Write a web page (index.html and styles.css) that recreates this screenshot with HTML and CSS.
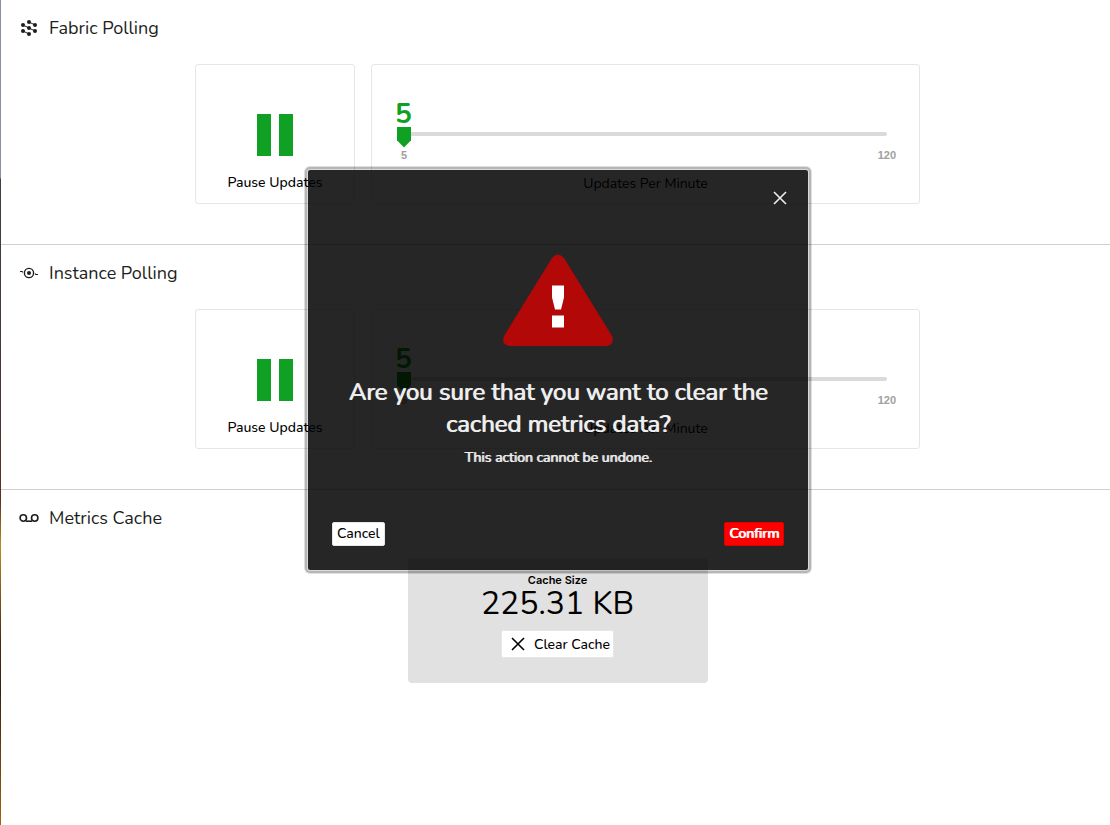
FILE: index.html
```html
<!DOCTYPE html>
<html lang="en">
<head>
<meta charset="utf-8">
<title>Settings</title>
<link rel="stylesheet" href="styles.css">
</head>
<body>
<main class="page">
  <section class="panel">
    <h2 class="panel-title">
      <svg class="panel-icon" viewBox="0 0 20 20" aria-hidden="true">
        <path d="M4 7l6 3 6 3M10 4l6 3M4 13l6 3" fill="none" stroke="currentColor" stroke-width="1"/>
        <g fill="currentColor"><circle cx="10" cy="4" r="2"/><circle cx="4" cy="7" r="2"/><circle cx="16" cy="7" r="2"/><circle cx="10" cy="10" r="2"/><circle cx="4" cy="13" r="2"/><circle cx="16" cy="13" r="2"/><circle cx="10" cy="16" r="2"/></g>
      </svg>
      Fabric Polling
    </h2>
    <div class="cards">
      <button class="card pause" type="button">
        <svg class="pause-icon" viewBox="0 0 36 42" aria-hidden="true"><path d="M0 0h14v42H0zM22 0h14v42H22z" fill="currentColor"/></svg>
        <span>Pause Updates</span>
      </button>
      <div class="card rate">
        <output class="rate-value" for="fabric-rate">5</output>
        <input class="slider" id="fabric-rate" type="range" min="5" max="120" value="5">
        <div class="scale"><span>5</span><span>120</span></div>
        <label class="rate-label" for="fabric-rate">Updates Per Minute</label>
      </div>
    </div>
  </section>

  <section class="panel">
    <h2 class="panel-title">
      <svg class="panel-icon" viewBox="0 0 20 20" aria-hidden="true">
        <circle cx="10" cy="10" r="4.6" fill="none" stroke="currentColor" stroke-width="1.4"/>
        <circle cx="10" cy="10" r="2" fill="currentColor"/>
        <path d="M1 8.5h2l1 .7M19 11.5h-2l-1-.7" fill="none" stroke="currentColor" stroke-width="1.1"/>
      </svg>
      Instance Polling
    </h2>
    <div class="cards">
      <button class="card pause" type="button">
        <svg class="pause-icon" viewBox="0 0 36 42" aria-hidden="true"><path d="M0 0h14v42H0zM22 0h14v42H22z" fill="currentColor"/></svg>
        <span>Pause Updates</span>
      </button>
      <div class="card rate">
        <output class="rate-value" for="instance-rate">5</output>
        <input class="slider" id="instance-rate" type="range" min="5" max="120" value="5">
        <div class="scale"><span>5</span><span>120</span></div>
        <label class="rate-label" for="instance-rate">Updates Per Minute</label>
      </div>
    </div>
  </section>

  <section class="panel panel-last">
    <h2 class="panel-title">
      <svg class="panel-icon" viewBox="0 0 20 20" aria-hidden="true">
        <g fill="none" stroke="currentColor" stroke-width="1.6"><circle cx="4.3" cy="10" r="3.2"/><circle cx="15.7" cy="10" r="3.2"/><path d="M7 13.2h6"/></g>
      </svg>
      Metrics Cache
    </h2>
    <div class="cache">
      <span class="cache-label">Cache Size</span>
      <span class="cache-size">225.31 KB</span>
      <button class="clear" type="button">
        <svg class="cross" viewBox="0 0 14 14" aria-hidden="true"><path d="M1 1l12 12M13 1L1 13" fill="none" stroke="currentColor" stroke-width="1.6"/></svg>
        Clear Cache
      </button>
    </div>
  </section>
</main>

<div class="overlay">
  <div class="dialog" role="alertdialog" aria-modal="true" aria-labelledby="dialog-title" aria-describedby="dialog-text">
    <button class="close" type="button" aria-label="Close">
      <svg class="cross" viewBox="0 0 14 14" aria-hidden="true"><path d="M1 1l12 12M13 1L1 13" fill="none" stroke="currentColor" stroke-width="1.6"/></svg>
    </button>
    <svg class="warning" viewBox="0 0 110 92" aria-hidden="true">
      <path d="M49 4q6-7 12 0L109 82q3 8-5 10H6q-8-2-5-10z" fill="#b30808"/>
      <path d="M49 31.500h12v12l-3 12h-6l-3-12zM49 61.500h12v12H49z" fill="#fff"/>
    </svg>
    <h1 class="dialog-title" id="dialog-title">Are you sure that you want to clear the cached metrics data?</h1>
    <p class="dialog-text" id="dialog-text">This action cannot be undone.</p>
    <div class="actions">
      <button class="btn btn-cancel" type="button">Cancel</button>
      <button class="btn btn-confirm" type="button">Confirm</button>
    </div>
  </div>
</div>
</body>
</html>
```

FILE: styles.css
```css
* { box-sizing: border-box; }

body {
  margin: 0;
  position: relative;
  background: #fff;
  color: #000;
  font-family: Nunito, Lato, "Open Sans", sans-serif;
}

button {
  font: inherit;
  color: inherit;
  cursor: pointer;
}

.page {
  min-height: 100vh;
  border-left: 1px solid;
  border-image: linear-gradient(#8791a3 0, #8791a3 178px, #443c48 180px, #48353a 400px, #5c3020 500px, #c08a20 545px, #4c2810 640px, #38200f 690px, #a8600c 825px) 1;
}

.panel {
  padding: 14px 0 40px 4px;
  border-bottom: 1px solid #d0d0d0;
}

.panel-last { border-bottom: 0; }

.panel-title {
  display: flex;
  align-items: center;
  gap: 10px;
  margin: 0 0 22px 14px;
  color: #1c1e21;
  font-size: 18px;
  font-weight: 400;
  line-height: 28px;
}

.panel-last .panel-title { margin-bottom: 26px; }

.panel-icon { width: 20px; height: 20px; }

.cards {
  display: flex;
  justify-content: center;
  gap: 16px;
}

.card {
  height: 140px;
  border: 1px solid #e6e6e6;
  border-radius: 3px;
  background: #fff;
}

.pause {
  display: flex;
  flex-direction: column;
  align-items: center;
  justify-content: flex-end;
  gap: 17px;
  width: 160px;
  padding: 0 0 10px;
  font-size: 14px;
  font-weight: 500;
  line-height: 20px;
}

.pause-icon { width: 36px; height: 42px; color: #10a024; }

.rate {
  display: flex;
  flex-direction: column;
  width: 549px;
  padding: 35px 23px 0;
}

.rate-value {
  color: #10a024;
  font-size: 28px;
  font-weight: 700;
  line-height: 28px;
}

.slider {
  appearance: none;
  width: calc(100% - 11px);
  height: 21px;
  margin: -5px 9px 4px 2px;
  background: transparent;
}

.slider::-webkit-slider-runnable-track {
  height: 4px;
  border-radius: 2px;
  background: #dadada;
}

.slider::-webkit-slider-thumb {
  appearance: none;
  width: 14px;
  height: 21px;
  margin-top: -5px;
  background: #10a024;
  clip-path: polygon(0 0, 100% 0, 100% 66%, 50% 100%, 0 66%);
}

.scale {
  display: flex;
  justify-content: space-between;
  padding-left: 6px;
  color: #a0a0a0;
  font-family: "Liberation Sans", Arial, sans-serif;
  font-size: 11px;
  font-weight: 700;
  line-height: 14px;
}

.rate-label {
  margin-top: 12px;
  font-size: 14px;
  line-height: 20px;
  text-align: center;
}

.cache {
  display: flex;
  flex-direction: column;
  align-items: center;
  width: 300px;
  height: 125px;
  margin: 0 auto;
  padding-top: 15px;
  border-radius: 4px;
  background: #e1e1e1;
}

.cache-label {
  font-family: Inter, sans-serif;
  font-size: 11px;
  font-weight: 600;
  line-height: 14px;
}

.cache-size {
  font-size: 32px;
  line-height: 34px;
}

.clear {
  display: flex;
  align-items: center;
  gap: 9px;
  height: 28px;
  margin-top: 9px;
  padding: 0 3px 0 9px;
  border: 1px solid #e6e6e6;
  border-radius: 2px;
  background: #fff;
  font-size: 14px;
  font-weight: 500;
}

.cross { display: block; width: 14px; height: 14px; }

.overlay {
  position: absolute;
  inset: 0;
  display: flex;
  align-items: flex-start;
  justify-content: center;
  padding: 169px 0 0 6px;
}

.dialog {
  display: flex;
  flex-direction: column;
  align-items: center;
  width: 502px;
  min-height: 402px;
  padding: 21px 24px 24px;
  border: 1px solid rgba(0, 0, 0, 0.15);
  border-radius: 3px;
  background: rgba(0, 0, 0, 0.85);
  background-clip: padding-box;
  box-shadow: 0 0 0 2px rgba(0, 0, 0, 0.18), 0 0 0 3px rgba(0, 0, 0, 0.13);
  color: #eee;
  text-align: center;
}

.close {
  align-self: flex-end;
  margin-right: -3px;
  padding: 0;
  border: 0;
  background: none;
}

.warning {
  width: 110px;
  height: 92px;
  margin-top: 49px;
}

.dialog-title {
  margin: 30px 0 0;
  font-size: 24px;
  font-weight: 400;
  line-height: 32px;
  text-shadow: 1px 0 currentColor;
}

.dialog-text {
  margin: 8px 0 0;
  font-size: 14px;
  font-weight: 400;
  line-height: 20px;
  text-shadow: 1px 0 currentColor;
}

.actions {
  display: flex;
  justify-content: space-between;
  width: 100%;
  margin-top: auto;
}

.btn {
  height: 24px;
  padding: 0 4px 2px;
  border: 1px solid #e6e6e6;
  border-radius: 2px;
  font-size: 14px;
  font-weight: 500;
}

.btn-cancel { background: #fff; color: #000; }

.btn-confirm {
  border-color: #e00000;
  background: #f00;
  color: #fff;
  text-shadow: 1px 0 currentColor;
}
```
